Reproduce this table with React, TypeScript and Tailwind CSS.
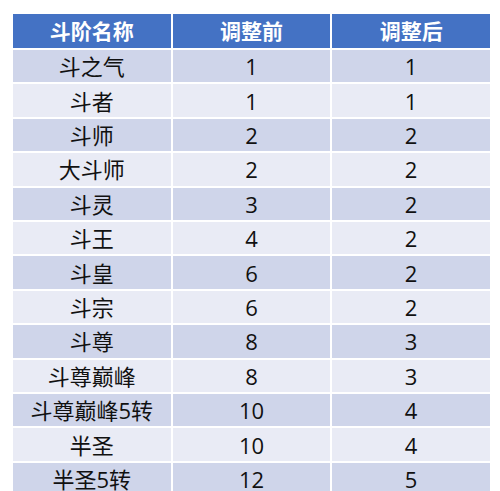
import React from "react";

const rows: [string, string, string][] = [
  ["斗之气", "1", "1"],
  ["斗者", "1", "1"],
  ["斗师", "2", "2"],
  ["大斗师", "2", "2"],
  ["斗灵", "3", "2"],
  ["斗王", "4", "2"],
  ["斗皇", "6", "2"],
  ["斗宗", "6", "2"],
  ["斗尊", "8", "3"],
  ["斗尊巅峰", "8", "3"],
  ["斗尊巅峰5转", "10", "4"],
  ["半圣", "10", "4"],
  ["半圣5转", "12", "5"],
];

export default function App() {
  return (
    <div
      className="w-[500px] h-[491px] overflow-hidden bg-white pt-[14px] pl-[13px]"
      style={{ fontFamily: '"Open Sans", "Noto Sans CJK SC", sans-serif' }}
    >
      <div className="w-[477px] grid grid-cols-3 gap-x-[2px] gap-y-[2px]">
        {["斗阶名称", "调整前", "调整后"].map((h) => (
          <div
            key={h}
            className="h-[34px] bg-[#4472c4] text-white font-bold text-[21px] flex items-center justify-center leading-none"
          >
            {h}
          </div>
        ))}
        {rows.map((r, i) =>
          r.map((c, j) => (
            <div
              key={`${i}-${j}`}
              className={`h-[32.42px] flex items-center justify-center text-[22px] leading-none text-[#111] ${
                i % 2 === 0 ? "bg-[#cfd5ea]" : "bg-[#e9ebf5]"
              }`}
            >
              {c}
            </div>
          ))
        )}
      </div>
    </div>
  );
}
